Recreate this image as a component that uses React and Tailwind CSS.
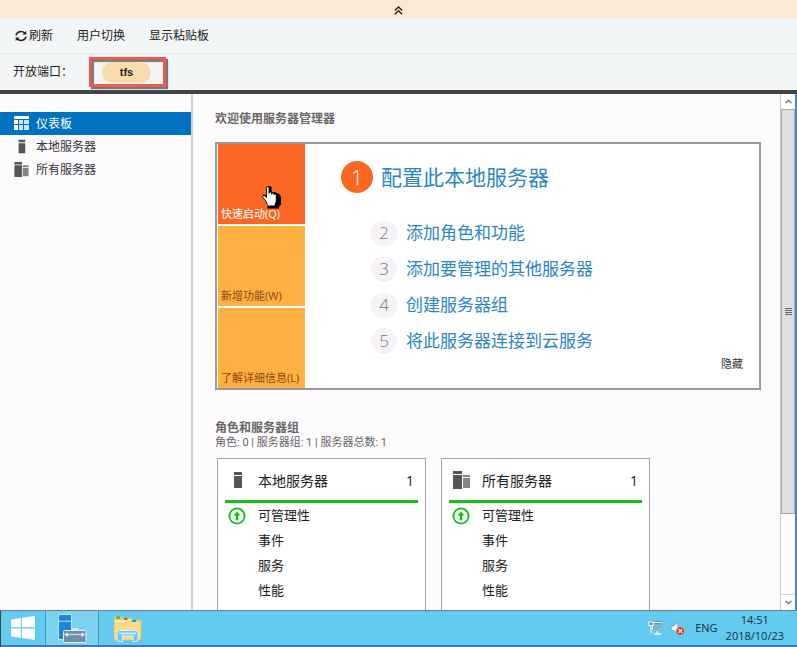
import React from "react";

const menuItems = ["用户切换", "显示粘贴板"];

const tiles = [
  { label: "快速启动(Q)", active: true },
  { label: "新增功能(W)", active: false },
  { label: "了解详细信息(L)", active: false },
];

const steps = [
  { n: 2, label: "添加角色和功能" },
  { n: 3, label: "添加要管理的其他服务器" },
  { n: 4, label: "创建服务器组" },
  { n: 5, label: "将此服务器连接到云服务" },
];

const cardRows = ["可管理性", "事件", "服务", "性能"];

function RefreshIcon() {
  return (
    <svg className="h-3 w-3" viewBox="0 0 12 12" fill="none" stroke="#222" strokeWidth="1.5">
      <path d="M1 5.3A5 4.6 0 0 1 9.8 3.2" />
      <path d="M11.3 0.8V4.6H7.5Z" fill="#222" stroke="none" />
      <path d="M11 6.7A5 4.6 0 0 1 2.2 8.8" />
      <path d="M0.7 11.2V7.4H4.5Z" fill="#222" stroke="none" />
    </svg>
  );
}

function CollapseIcon() {
  return (
    <svg className="h-[9px] w-[9px]" viewBox="0 0 9 9" fill="none" stroke="#222" strokeWidth="1.4">
      <path d="M0.8 4.5 4.5 1 8.2 4.5M0.8 8.3 4.5 4.8 8.2 8.3" />
    </svg>
  );
}

function DashboardIcon() {
  return (
    <svg className="h-[15px] w-[15px]" viewBox="0 0 15 15">
      <path fill="#fff" d="M0 0h15v3H0zM0 4h4v4H0zM0 9h4v5H0z" />
      <path fill="#cfe3f5" d="M5 4h4v4H5zM10 4h5v4h-5zM5 9h4v5H5zM10 9h5v5h-5z" />
    </svg>
  );
}

function ServerIcon({ className }) {
  return (
    <svg className={className} viewBox="0 0 17 18" fill="#555">
      <path d="M5 1h8v3H5zM5 5h8v12H5z" />
    </svg>
  );
}

function ServersIcon({ className }) {
  return (
    <svg className={className} viewBox="0 0 17 18">
      <path fill="#555" d="M0 0h9v3H0zM0 4h9v14H0z" />
      <path fill="#858585" d="M10 4h7v2h-7zM10 7h7v10h-7z" />
    </svg>
  );
}

function UpIcon() {
  return (
    <svg className="h-[18px] w-[18px]" viewBox="0 0 18 18">
      <circle cx="9" cy="9" r="7.6" fill="#fff" stroke="#10c016" strokeWidth="1.8" />
      <path d="M9 4.4 12.3 8.6H10.2V13.2H7.8V8.6H5.7Z" fill="#10c016" />
    </svg>
  );
}

function HandCursor() {
  return (
    <svg className="absolute left-[43px] top-[41px] h-6 w-[21px]" viewBox="0 0 21 24">
      <path
        d="M6 1.2h3.6l1 1v4.6l4.4.6 4 2 1 3.4v6.8l-2 2V23.5H6.5V20L4 15.6 1.2 12l1-2.4 3 .6V2.4Z"
        fill="#000"
      />
      <path
        d="M6 2.2h1.6v6.6h1V7.6h1.6v1.8h.9V8.4h1.5v1.8h.8V9.6h1.4v7.2l-1 2v1.6H6.6v-2L4.8 15.6 2.2 12.2v-1.3l1.4.1L5.6 13h.4Z"
        fill="#fff"
      />
    </svg>
  );
}

function WindowsLogo() {
  return (
    <svg className="h-6 w-6" viewBox="0 0 24 24" fill="#fff">
      <path d="M0 3.4 9.8 2v9.3H0zM10.8 1.8 24 0v11.3H10.8zM0 12.4h9.8v9.4L0 20.4zM10.8 12.4H24V24l-13.2-1.9z" />
    </svg>
  );
}

function ServerManagerIcon() {
  return (
    <svg className="h-[29px] w-[29px]" viewBox="0 0 29 29">
      <path d="M.5.5h13v25H.5z" fill="#1c86dc" stroke="#bfe6f8" />
      <path d="M1 7.2h12" stroke="#bfe6f8" />
      <path d="M14 17v-2h5.500v2" fill="none" stroke="#dff0f8" strokeWidth="1.4" />
      <rect x="5.500" y="16.500" width="22.500" height="12" rx="1" fill="#6f8ea8" stroke="#dff0f8" />
      <path d="M6 20.500h21.500" stroke="#c8d8e4" strokeWidth="1.4" />
      <path d="M9 19v3.500M24.500 19v3.500" stroke="#fff" strokeWidth="1.6" />
    </svg>
  );
}

function ExplorerIcon() {
  return (
    <svg className="h-[27px] w-[29px]" viewBox="0 0 29 27">
      <path d="M1 2.500 2 1h6l1.500 2H18l2 2h8v18l-1 2H2l-1-2Z" fill="#e9c766" />
      <path d="M2 5h8l1-1h7l2 3h7v16H2Z" fill="#fbeeb4" />
      <path d="M1 8h11l2-2h14v17l-1 2H2l-1-2Z" fill="#f6dd86" stroke="#e3bf58" strokeWidth=".6" />
      <path d="M3 1.500h4v2H3z" fill="#35b335" />
      <path d="M11 3h3.500v2H11z" fill="#e0502f" />
      <path d="M19 5h4v2h-4z" fill="#2f95dd" />
      <path d="M4 24v-6q0-2.500 2.500-2.500h16q2.500 0 2.500 2.500v6q0 2.500-2.500 2.500H20v-5.500H9.500v5.500H6.500Q4 26.500 4 24Z" fill="#7cc4ea" stroke="#d8f1fb" />
      <path d="M6 17.500h17v2H6z" fill="#c6eafa" />
    </svg>
  );
}

function NetworkIcon() {
  return (
    <svg className="h-[14px] w-[15px]" viewBox="0 0 15 14" fill="none">
      <rect x="4.500" y="1.500" width="9.500" height="7.500" fill="#79b9d2" stroke="#3d7288" strokeWidth="2" />
      <rect x="4.500" y="1.500" width="9.500" height="7.500" stroke="#eefaff" />
      <path d="M9.300 10v2.500M6 13h7" stroke="#eefaff" strokeWidth="1.300" />
      <path d="M.8 1h4.400v3.500H.8zM3 4.500v6.500h2" fill="#5f93aa" stroke="#eefaff" strokeWidth="1.200" />
    </svg>
  );
}

function MutedIcon() {
  return (
    <svg className="h-[15px] w-[15px]" viewBox="0 0 15 15">
      <path d="M1 5h2.500L8 1v12L3.500 9.500H1Z" fill="#e6f5fb" stroke="#6a9aae" strokeWidth=".9" />
      <circle cx="10.300" cy="10" r="4.200" fill="#dc3434" stroke="#f6c3c3" strokeWidth=".5" />
      <path d="m8.500 8.200 3.600 3.600m0-3.600-3.600 3.600" stroke="#fff" strokeWidth="1.300" />
    </svg>
  );
}

function TopBars() {
  return (
    <header className="border-b-4 border-[#444] bg-[#f3f6f7] text-xs text-[#222]">
      <button type="button" aria-label="收起" className="flex h-[18px] w-full items-center justify-center bg-[#fbe9d4] pt-[2px]">
        <CollapseIcon />
      </button>
      <nav className="flex h-9 items-center gap-6 border-b border-[#f3e4e1] pl-[15px]">
        <button type="button" className="flex items-center gap-[2px]">
          <RefreshIcon />
          刷新
        </button>
        {menuItems.map((m) => (
          <button key={m} type="button">{m}</button>
        ))}
      </nav>
      <div className="flex h-9 items-center gap-4 pl-[13px]">
        <span className="w-[60px] whitespace-nowrap">开放端口：</span>
        <div className="flex h-[30px] w-[77px] items-center justify-center border-[3px] border-[#ee5b4d] pr-[2px] shadow-[2px_2px_1px_#777,inset_2px_2px_1px_#777]">
          <button type="button" className="h-[21px] w-[49px] rounded-full bg-[#f8dcab] font-['Liberation_Sans',sans-serif] text-[11px] font-bold leading-none">tfs</button>
        </div>
      </div>
    </header>
  );
}

function Sidebar() {
  return (
    <nav className="w-[193px] shrink-0 border-r-2 border-[#d2d0d4] pt-[18px] text-[12px] text-[#333]">
      <a href="#dashboard" className="flex h-[23px] items-center gap-[7px] bg-[#0072c0] pl-[14px] text-white">
        <DashboardIcon />
        仪表板
      </a>
      <a href="#local" className="flex h-[23px] items-center gap-[7px] pl-[14px]">
        <ServerIcon className="h-[15px] w-[15px]" />
        本地服务器
      </a>
      <a href="#all" className="flex h-[23px] items-center gap-[7px] pl-[14px]">
        <ServersIcon className="h-[15px] w-[15px]" />
        所有服务器
      </a>
    </nav>
  );
}

function Welcome() {
  return (
    <section className="mt-[13px] flex border-2 border-[#9b9b9d] bg-white">
      <div className="flex w-[88px] shrink-0 flex-col gap-[2px] pl-px">
        {tiles.map((t) => (
          <button
            key={t.label}
            type="button"
            className={
              t.active
                ? "relative flex h-20 items-end whitespace-nowrap bg-[#f96722] pb-[2px] pl-[3px] text-[11px] text-white"
                : "relative flex h-20 items-end whitespace-nowrap bg-[#ffb040] pb-[2px] pl-[3px] text-[11px] text-[#8a4a12]"
            }
          >
            {t.label}
            {t.active && <HandCursor />}
          </button>
        ))}
      </div>
      <div className="flex flex-1 flex-col pl-9 pr-4 pt-[17px] text-[#2a86c6]">
        <a href="#configure" className="flex items-center gap-2 text-[21px] leading-8">
          <span className="flex h-8 w-8 items-center justify-center rounded-full bg-[#f96722] font-light text-white">1</span>
          配置此本地服务器
        </a>
        <ol className="mt-[27px] flex flex-col gap-[10px] pl-[30px]">
          {steps.map((s) => (
            <li key={s.n}>
              <a href={"#step" + s.n} className="flex items-center gap-[9px] text-[17px] leading-[26px]">
                <span className="flex h-[26px] w-[26px] items-center justify-center rounded-full bg-[#f6f2f7] font-light text-[#777]">{s.n}</span>
                {s.label}
              </a>
            </li>
          ))}
        </ol>
        <button type="button" className="mt-[2px] self-end text-[11px] leading-4 text-[#333]">隐藏</button>
      </div>
    </section>
  );
}

function ServerCard({ title, icon }) {
  return (
    <article className="flex w-[209px] flex-col border border-b-0 border-[#a3a3a5] bg-white px-[7px] text-[#222]">
      <header className="flex h-11 items-center border-b-[3px] border-[#10c016] px-1 pt-px text-[14px]">
        {icon}
        <h3 className="ml-3 flex-1">{title}</h3>
        <span>1</span>
      </header>
      <ul className="text-[13px]">
        {cardRows.map((r, i) => (
          <li key={r} className="flex h-[25px] items-center pl-[3px]">
            <span className="w-[30px]">{i === 0 && <UpIcon />}</span>
            {r}
          </li>
        ))}
      </ul>
    </article>
  );
}

function Scrollbar() {
  return (
    <div aria-hidden="true" className="flex w-[15px] shrink-0 flex-col border-l border-[#c8c8ca] bg-white">
      <div className="flex h-[15px] items-center justify-center">
        <svg className="h-[5px] w-[7px]" viewBox="0 0 7 5" fill="none" stroke="#777" strokeWidth="1.500"><path d="M.5 4.200 3.500 1.200 6.500 4.200" /></svg>
      </div>
      <div className="flex grow-[405] basis-0 flex-col items-center justify-center gap-px border border-[#aaa] bg-[#dfdfdf]">
        <span className="h-px w-[7px] bg-[#666]" />
        <span className="h-px w-[7px] bg-[#666]" />
        <span className="h-px w-[7px] bg-[#666]" />
        <span className="h-px w-[7px] bg-[#666]" />
      </div>
      <div className="grow-[80] basis-0 border-b border-[#d0d0d0] bg-[#fefbff]" />
      <div className="flex h-[15px] items-center justify-center">
        <svg className="h-[5px] w-[7px]" viewBox="0 0 7 5" fill="none" stroke="#777" strokeWidth="1.500"><path d="M.5.8 3.500 3.800 6.500.8" /></svg>
      </div>
    </div>
  );
}

function Taskbar() {
  return (
    <footer className="flex h-[37px] items-stretch border-b-2 border-l border-t border-b-[#3c78b4] border-l-[#444] border-t-[#6b7f88] bg-[#63caf0] text-[#12303c]">
      <button type="button" aria-label="开始" className="flex w-11 items-center justify-center">
        <WindowsLogo />
      </button>
      <button type="button" aria-label="服务器管理器" className="flex w-[54px] items-center justify-center border-x border-[#4a94b0] bg-[#7ad2ef]">
        <ServerManagerIcon />
      </button>
      <button type="button" aria-label="文件资源管理器" className="flex w-14 items-center justify-center">
        <ExplorerIcon />
      </button>
      <div className="ml-auto flex items-center pr-[13px] text-[11px]">
        <NetworkIcon />
        <span className="ml-[7px]"><MutedIcon /></span>
        <span className="ml-[10px]">ENG</span>
        <time className="ml-2 text-center leading-4">
          14:51
          <br />
          2018/10/23
        </time>
      </div>
    </footer>
  );
}

export default function App() {
  return (
    <div className="flex min-h-screen flex-col bg-[#fefbff] font-['Open_Sans','Noto_Sans_CJK_SC',sans-serif]">
      <TopBars />
      <div className="flex flex-1 border-r-2 border-[#4a86cc]">
        <Sidebar />
        <main className="flex min-w-0 flex-1 flex-col pl-[22px] pr-[19px] pt-[15px] text-[#666]">
          <h1 className="text-[12px] font-bold leading-5">欢迎使用服务器管理器</h1>
          <Welcome />
          <h2 className="mt-[30px] text-[12px] font-bold leading-4">角色和服务器组</h2>
          <p className="font-['Roboto','Noto_Sans_CJK_SC',sans-serif] text-[11px] leading-[14px]">角色: 0 | 服务器组: 1 | 服务器总数: 1</p>
          <div className="mt-2 flex flex-1 gap-[15px] pl-[2px]">
            <ServerCard title="本地服务器" icon={<ServerIcon className="h-[18px] w-[17px]" />} />
            <ServerCard title="所有服务器" icon={<ServersIcon className="h-[18px] w-[17px]" />} />
          </div>
        </main>
        <Scrollbar />
      </div>
      <Taskbar />
    </div>
  );
}
